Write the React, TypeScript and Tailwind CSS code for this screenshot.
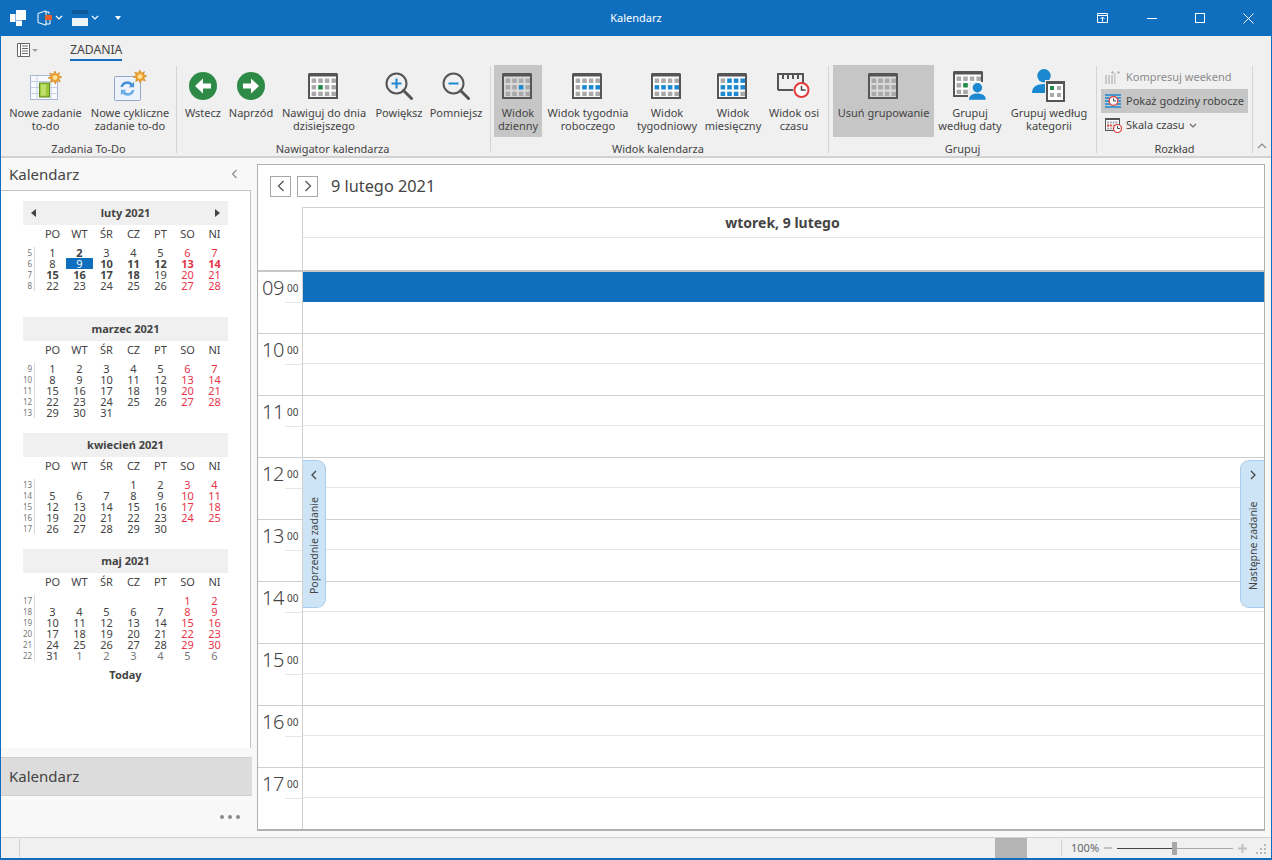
import React from 'react';

const GREY = '#a9a9a9';

type CalIconProps = {
    cells?: Record<number, string>;
    fill?: string;
};

// 4 x 3 calendar glyph used all over the ribbon
const CalIcon: React.FC<CalIconProps> = ({ cells = {}, fill = '#ffffff' }) => {
    const items = [];
    for (let r = 0; r < 3; r++) {
        for (let c = 0; c < 4; c++) {
            const i = r * 4 + c;
            items.push(<rect key={i} x={3.6 + c * 6.6} y={5.5 + r * 6.6} width={4.6} height={4.4} fill={cells[i] || GREY} />);
        }
    }
    return (
        <svg width="30" height="26" viewBox="0 0 30 26" className="mr-[2px]">
            <rect x="1" y="1.5" width="28" height="23.5" fill={fill} stroke="#555555" strokeWidth="2" />
            <rect x="1" y="0" width="28" height="3.5" fill="#555555" />
            {items}
        </svg>
    );
};

const Star: React.FC<{ x: number; y: number }> = ({ x, y }) => (
    <g transform={`translate(${x} ${y})`}>
        <polygon points="7,0 8.4,3.2 11.6,1.6 10.6,4.8 14,6 10.8,7.6 12.4,11 8.8,9.8 7.4,13.4 5.8,10 2.6,11.6 3.4,8 0,7 3.2,5.2 1.6,2 5,3.2" fill="#eda12f" stroke="#c77f1c" strokeWidth="0.5" />
        <circle cx="7" cy="6.6" r="2.4" fill="#ffe39a" />
    </g>
);

const NewTaskIcon = () => (
    <svg width="34" height="30" viewBox="0 0 34 30">
        <rect x="1.5" y="4.5" width="27" height="24" fill="#f7f9fd" stroke="#a8b6d6" />
        <path d="M1.5 10.5h27M1.5 16.5h27M1.5 22.5h27M8 4.5v24M22 4.5v24" stroke="#c4d0e6" fill="none" />
        <rect x="10.5" y="12" width="10" height="14" fill="#9cc83c" stroke="#5f8a1e" />
        <rect x="12" y="13.5" width="5" height="11" fill="#bfe06a" />
        <Star x={19} y={0} />
    </svg>
);

const RecurringIcon = () => (
    <svg width="34" height="32" viewBox="0 0 34 32">
        <rect x="1.5" y="6.5" width="26" height="24" rx="1" fill="#eef3fb" stroke="#93a6c8" />
        <path d="M7.5 17a7 7 0 0 1 12-3.6l1.6-1.6v5.4h-5.4l1.8-1.8a4.6 4.6 0 0 0-7.6 1.6z" fill="#4c93d6" />
        <path d="M21.5 20a7 7 0 0 1-12 3.6l-1.6 1.6v-5.4h5.4l-1.8 1.8a4.6 4.6 0 0 0 7.6-1.6z" fill="#6aaee6" />
        <Star x={20} y={0} />
    </svg>
);

const ArrowCircle: React.FC<{ back?: boolean }> = ({ back }) => (
    <svg width="28" height="28" viewBox="0 0 28 28">
        <circle cx="14" cy="14" r="14" fill="#2e8b47" />
        <g transform={back ? 'rotate(180 14 14)' : undefined}>
            <path d="M6 11.5h8V6.5l8 7.5-8 7.5v-5H6z" fill="#ffffff" />
        </g>
    </svg>
);

const Magnifier: React.FC<{ plus?: boolean }> = ({ plus }) => (
    <svg width="28" height="28" viewBox="0 0 28 28">
        <circle cx="11.5" cy="11.5" r="10" fill="none" stroke="#555555" strokeWidth="2" />
        <path d="M18.5 18.5L26.5 26.5" stroke="#555555" strokeWidth="3" strokeLinecap="round" />
        <path d={plus ? 'M6.5 11.5h10M11.5 6.5v10' : 'M6.5 11.5h10'} stroke="#1b88d0" strokeWidth="2" />
    </svg>
);

const ClockBadge: React.FC<{ cx: number; cy: number; r: number }> = ({ cx, cy, r }) => (
    <g>
        <circle cx={cx} cy={cy} r={r} fill="#ffffff" stroke="#e23b3b" strokeWidth={r > 5 ? 2 : 1.2} />
        <path d={`M${cx} ${cy - r * 0.6}V${cy}H${cx + r * 0.6}`} stroke="#444444" strokeWidth={r > 5 ? 1.5 : 1} fill="none" />
    </g>
);

const TimelineIcon = () => (
    <svg width="34" height="28" viewBox="0 0 34 28">
        <path d="M1 18V2h25v9M1 18h15M6 2v5M11 2v5M16 2v5M21 2v5" stroke="#555555" strokeWidth="2" fill="none" />
        <ClockBadge cx={24.5} cy={18} r={7} />
    </svg>
);

const Person: React.FC<{ x: number; y: number; s: number }> = ({ x, y, s }) => (
    <g transform={`translate(${x} ${y}) scale(${s})`} fill="#1b88d0">
        <circle cx="8" cy="4.5" r="4.5" />
        <path d="M0 16c0-4 3-6 8-6s8 2 8 6z" />
    </g>
);

const GroupDateIcon = () => (
    <svg width="34" height="30" viewBox="0 0 34 30">
        <rect x="1" y="1.5" width="28" height="23.5" fill="#ffffff" stroke="#555555" strokeWidth="2" />
        <rect x="1" y="0" width="28" height="3.5" fill="#555555" />
        {[0, 1, 2].map((r) => [0, 1, 2, 3].map((c) => (
            <rect key={`${r}-${c}`} x={3.6 + c * 6.6} y={5.5 + r * 6.6} width={4.6} height={4.4} fill={r === 1 && c === 1 ? '#1e8a45' : GREY} />
        )))}
        <rect x="15" y="11" width="19" height="19" fill="#f0f0f0" />
        <Person x={16} y={12} s={1.05} />
    </svg>
);

const GroupCategoryIcon = () => (
    <svg width="34" height="34" viewBox="0 0 34 34">
        <Person x={0} y={0} s={1.5} />
        <rect x="13" y="11" width="21" height="23" fill="#f0f0f0" />
        <rect x="15" y="13" width="17" height="19" fill="#ffffff" stroke="#555555" strokeWidth="2" />
        <rect x="14" y="12" width="19" height="3" fill="#555555" />
        <rect x="18" y="17" width="4" height="4" fill="#1e8a45" />
        <rect x="25" y="17" width="4" height="4" fill={GREY} />
        <rect x="18" y="24" width="4" height="4" fill={GREY} />
        <rect x="25" y="24" width="4" height="4" fill={GREY} />
    </svg>
);

const CompressIcon = () => (
    <svg width="16" height="14" viewBox="0 0 16 14">
        <path d="M1 5h2v9H1zM4 5h2v9H4zM7 5h2v9H7zM10 3h1.5v11H10z" fill="#c8c8c8" />
        <path d="M7 2.5h3M8.5 1v3M13 2.5h3M14.5 1v3" stroke="#b8b8b8" />
    </svg>
);

const WorkHoursIcon = () => (
    <svg width="16" height="14" viewBox="0 0 16 14">
        <path d="M0 1h16M0 4h6M0 7h5M0 10h5M0 13h16M11 4h5M11 7h5M11 10h5" stroke="#1b88d0" strokeWidth="1.6" />
        <ClockBadge cx={8.5} cy={7} r={4.3} />
    </svg>
);

const ScaleIcon = () => (
    <svg width="17" height="15" viewBox="0 0 17 15">
        <rect x="0.5" y="0.5" width="14" height="12" fill="#ffffff" stroke="#555555" />
        <rect x="0" y="0" width="15" height="2" fill="#555555" />
        {[0, 1, 2].map((r) => [0, 1, 2, 3].map((c) => (
            <rect key={`${r}-${c}`} x={2 + c * 2.8} y={3.5 + r * 3} width={2} height={2} fill={r === 1 && c < 2 ? '#e23b3b' : GREY} />
        )))}
        <ClockBadge cx={12.5} cy={10.5} r={4} />
    </svg>
);

type RibbonButtonProps = {
    w: string;
    icon: React.ReactNode;
    lines: string[];
    active?: boolean;
};

const RibbonButton: React.FC<RibbonButtonProps> = ({ w, icon, lines, active }) => (
    <div className={`${w} h-[72px] shrink-0 flex flex-col items-center pt-[7px] ${active ? 'bg-[#c6c6c6]' : ''}`}>
        <div className="h-[28px] flex items-center justify-center">{icon}</div>
        <div className="mt-[6px] text-center leading-[13px] whitespace-nowrap">
            {lines.map((l) => <div key={l}>{l}</div>)}
        </div>
    </div>
);

const RibbonGroup: React.FC<{ w: string; pad?: string; labelPad?: string; label: string; children: React.ReactNode }> = ({ w, pad, labelPad, label, children }) => (
    <div className={`${w} shrink-0 flex flex-col`}>
        <div className={`flex h-[72px] ${pad || ''}`}>{children}</div>
        <div className={`mt-[5px] text-center leading-[14px] ${labelPad || ''}`}>{label}</div>
    </div>
);

const Sep = () => <div className="w-px h-[87px] mt-px shrink-0 bg-[#d4d4d4]" />;

const blue = '#1b88d0';
const green = '#1e8a45';

type Month = {
    title: string;
    arrows?: boolean;
    firstWeek: number;
    offset: number;
    days: number;
    trailing?: number;
    bold?: number[];
    selected?: number;
};

const months: Month[] = [
    { title: 'luty 2021', arrows: true, firstWeek: 5, offset: 0, days: 28, bold: [2, 10, 11, 12, 13, 14, 15, 16, 17, 18], selected: 9 },
    { title: 'marzec 2021', firstWeek: 9, offset: 0, days: 31 },
    { title: 'kwiecień 2021', firstWeek: 13, offset: 3, days: 30 },
    { title: 'maj 2021', firstWeek: 17, offset: 5, days: 31, trailing: 6 },
];

const dayNames = ['PO', 'WT', 'ŚR', 'CZ', 'PT', 'SO', 'NI'];

const MonthView: React.FC<{ m: Month }> = ({ m }) => {
    const cells: { d: number; out?: boolean }[] = [];
    for (let i = 1; i <= m.days; i++) cells.push({ d: i });
    for (let i = 1; i <= (m.trailing || 0); i++) cells.push({ d: i, out: true });
    const rows = Math.ceil((m.offset + cells.length) / 7);
    const weeks = [];
    for (let r = 0; r < rows; r++) {
        const row = [];
        for (let c = 0; c < 7; c++) {
            const cell = cells[r * 7 + c - m.offset];
            if (!cell || r * 7 + c < m.offset) {
                row.push(<div key={c} className="w-[27px]" />);
                continue;
            }
            const weekend = c >= 5;
            const isSel = !cell.out && cell.d === m.selected;
            const isBold = !cell.out && m.bold?.includes(cell.d);
            let color = 'text-[#444444]';
            if (weekend) color = 'text-[#e8344a]';
            if (cell.out) color = 'text-[#777777]';
            if (isSel) color = 'bg-[#106ebe] text-white';
            row.push(
                <div key={c} className={`w-[27px] text-center ${color} ${isBold ? 'font-bold' : ''}`}>{cell.d}</div>
            );
        }
        weeks.push(
            <div key={r} className="flex h-[11px] leading-[11px]">
                <div className="w-[12px] pr-[2px] text-right text-[8px] text-[#777777] border-r border-[#d8d8d8] mr-[4px]">{m.firstWeek + r}</div>
                {row}
            </div>
        );
    }
    return (
        <div className="w-[205px] min-h-[116px]">
            <div className="h-[24px] bg-[#f0f0f0] flex items-center justify-center relative font-bold text-[#444444]">
                {m.title}
                {m.arrows && <span className="absolute left-[8px] top-[8px] w-0 h-0 border-y-[4px] border-y-transparent border-r-[5px] border-r-[#444444]" />}
                {m.arrows && <span className="absolute right-[8px] top-[8px] w-0 h-0 border-y-[4px] border-y-transparent border-l-[5px] border-l-[#444444]" />}
            </div>
            <div className="flex h-[18px] items-center pl-[16px] text-[#444444]">
                {dayNames.map((n) => <div key={n} className="w-[27px] text-center">{n}</div>)}
            </div>
            <div className="mt-[4px]">{weeks}</div>
        </div>
    );
};

const hours = ['09', '10', '11', '12', '13', '14', '15', '16', '17'];

const SideTab: React.FC<{ right?: boolean; label: string }> = ({ right, label }) => (
    <div className={`absolute top-[295px] h-[148px] bg-[#cde4f7] border border-[#a9cdea] flex flex-col items-center pt-[9px] ${right ? 'w-[24px] right-0 rounded-l-[9px] border-r-0' : 'w-[23px] left-[45px] rounded-r-[9px] border-l-0'}`}>
        <svg width="8" height="10" viewBox="0 0 8 10" className="mb-[16px] shrink-0">
            <path d={right ? 'M2 1l4 4-4 4' : 'M6 1L2 5l4 4'} stroke="#444444" strokeWidth="1.3" fill="none" />
        </svg>
        <div className="[writing-mode:vertical-rl] rotate-180 text-[#444444] text-[10.5px] leading-[12px] whitespace-nowrap h-[100px] text-center">{label}</div>
    </div>
);

export default function App() {
    return (
        <div className="w-[1272px] h-[860px] flex flex-col bg-[#f8f8f8] border-x border-b-2 border-[#106ebe] overflow-hidden font-['Noto_Sans',sans-serif] text-[11px] text-[#444444]">
            {/* title bar */}
            <div className="h-[36px] -mx-px shrink-0 bg-[#106ebe] flex items-center relative text-white">
                <svg width="16" height="16" viewBox="0 0 16 16" className="ml-[10px]">
                    <path d="M6 0h10v10H6zM0 4h5.5v8H0zM6 10.5h6V16H6z" fill="#ffffff" />
                </svg>
                <svg width="16" height="16" viewBox="0 0 16 16" className="ml-[11px]">
                    <path d="M1 3.5L9 .8v14.4L1 12.5zM9 2h3v2M9 14h4V9" stroke="#ffffff" strokeWidth="1" fill="none" />
                    <rect x="8" y="5" width="7" height="5" fill="#e8602c" />
                </svg>
                <svg width="8" height="6" viewBox="0 0 8 6" className="ml-[2px]"><path d="M1 1l3 3 3-3" stroke="#ffffff" strokeWidth="1.2" fill="none" /></svg>
                <svg width="16" height="16" viewBox="0 0 16 16" className="ml-[9px]">
                    <rect x="0" y="0" width="16" height="4" fill="#0b5a9b" />
                    <rect x="0" y="8" width="16" height="8" fill="#eef3f8" />
                </svg>
                <svg width="8" height="6" viewBox="0 0 8 6" className="ml-[3px]"><path d="M1 1l3 3 3-3" stroke="#ffffff" strokeWidth="1.2" fill="none" /></svg>
                <span className="ml-[16px] w-0 h-0 border-x-[3.5px] border-x-transparent border-t-[4px] border-t-white" />
                <div className="absolute left-0 right-0 text-center text-[11px] text-white">Kalendarz</div>
                <div className="ml-auto flex items-center relative">
                    <svg width="12" height="11" viewBox="0 0 12 11" className="mr-[38px]">
                        <path d="M.5.5h10v9H.5zM.5 2.5h10M5.5 8.5V4M3.5 6l2-2 2 2" stroke="#ffffff" fill="none" />
                    </svg>
                    <div className="w-[10px] h-px bg-white mr-[38px]" />
                    <div className="w-[10px] h-[10px] border border-white mr-[38px]" />
                    <svg width="11" height="11" viewBox="0 0 11 11" className="mr-[18px]">
                        <path d="M.5.5l10 10M10.5.5l-10 10" stroke="#ffffff" />
                    </svg>
                </div>
            </div>

            {/* ribbon */}
            <div className="h-[122px] shrink-0 bg-[#f0f0f0] border-b-2 border-[#d2d2d2] flex flex-col">
                <div className="h-[29px] flex items-start pl-[16px]">
                    <svg width="21" height="14" viewBox="0 0 21 14" className="mt-[7px]">
                        <path d="M.5.5h12v13H.5zM3.5.5v13M5 3h6M5 5.5h6M5 8h6M5 10.5h6" stroke="#666666" fill="#ffffff" />
                        <path d="M15 6h6l-3 3z" fill="#a0a0a0" />
                    </svg>
                    <div className="ml-[32px] mt-[6px] h-[19px] border-b-2 border-[#106ebe] text-[12.2px] leading-[15px] text-[#444444]">ZADANIA</div>
                </div>
                <div className="flex h-[91px]">
                    <RibbonGroup w="w-[175px]" pad="pl-[2px]" label="Zadania To-Do">
                        <RibbonButton w="w-[85px]" icon={<NewTaskIcon />} lines={['Nowe zadanie', 'to-do']} />
                        <RibbonButton w="w-[84px]" icon={<RecurringIcon />} lines={['Nowe cykliczne', 'zadanie to-do']} />
                    </RibbonGroup>
                    <Sep />
                    <RibbonGroup w="w-[313px]" pad="pl-[4px]" labelPad="pr-[2px]" label="Nawigator kalendarza">
                        <RibbonButton w="w-[44px]" icon={<ArrowCircle back />} lines={['Wstecz']} />
                        <RibbonButton w="w-[52px]" icon={<ArrowCircle />} lines={['Naprzód']} />
                        <RibbonButton w="w-[94px]" icon={<CalIcon cells={{ 5: green }} />} lines={['Nawiguj do dnia', 'dzisiejszego']} />
                        <RibbonButton w="w-[56px]" icon={<Magnifier plus />} lines={['Powiększ']} />
                        <RibbonButton w="w-[58px]" icon={<Magnifier />} lines={['Pomniejsz']} />
                    </RibbonGroup>
                    <Sep />
                    <RibbonGroup w="w-[337px]" pad="pl-[3px]" labelPad="pr-[3px]" label="Widok kalendarza">
                        <RibbonButton w="w-[48px]" active icon={<CalIcon fill="#d8d8d8" cells={{ 6: blue }} />} lines={['Widok', 'dzienny']} />
                        <RibbonButton w="w-[92px]" icon={<CalIcon cells={{ 5: blue, 6: blue, 7: blue }} />} lines={['Widok tygodnia', 'roboczego']} />
                        <RibbonButton w="w-[66px]" icon={<CalIcon cells={{ 4: blue, 5: blue, 6: blue, 7: blue }} />} lines={['Widok', 'tygodniowy']} />
                        <RibbonButton w="w-[66px]" icon={<CalIcon cells={{ 1: blue, 2: blue, 3: blue, 4: blue, 5: blue, 6: blue, 7: blue, 8: blue, 9: blue, 10: blue }} />} lines={['Widok', 'miesięczny']} />
                        <RibbonButton w="w-[56px]" icon={<TimelineIcon />} lines={['Widok osi', 'czasu']} />
                    </RibbonGroup>
                    <Sep />
                    <RibbonGroup w="w-[267px]" pad="pl-[4px]" label="Grupuj">
                        <RibbonButton w="w-[101px]" active icon={<CalIcon fill="#d8d8d8" cells={{}} />} lines={['Usuń grupowanie']} />
                        <RibbonButton w="w-[72px]" icon={<GroupDateIcon />} lines={['Grupuj', 'według daty']} />
                        <RibbonButton w="w-[86px]" icon={<GroupCategoryIcon />} lines={['Grupuj według', 'kategorii']} />
                    </RibbonGroup>
                    <Sep />
                    <div className="w-[155px] shrink-0 flex flex-col">
                        <div className="h-[24px] flex items-center pl-[7px] gap-[6px] text-[#8c8c8c]"><CompressIcon /><span>Kompresuj weekend</span></div>
                        <div className="h-[24px] ml-[4px] w-[147px] bg-[#c6c6c6] flex items-center pl-[4px] gap-[5px]"><WorkHoursIcon /><span>Pokaż godziny robocze</span></div>
                        <div className="h-[24px] flex items-center pl-[8px] gap-[4px]">
                            <ScaleIcon /><span>Skala czasu</span>
                            <svg width="8" height="5" viewBox="0 0 8 5"><path d="M1 1l3 3 3-3" stroke="#666666" strokeWidth="1.1" fill="none" /></svg>
                        </div>
                        <div className="mt-[5px] text-center leading-[14px]">Rozkład</div>
                    </div>
                    <Sep />
                    <div className="flex-1 flex justify-center items-end pb-[7px]">
                        <svg width="10" height="6" viewBox="0 0 10 6"><path d="M1 5l4-4 4 4" stroke="#8a8a8a" strokeWidth="1.2" fill="none" /></svg>
                    </div>
                </div>
            </div>

            {/* body */}
            <div className="flex-1 flex min-h-0">
                {/* left pane */}
                <div className="w-[250px] shrink-0 flex flex-col">
                    <div className="h-[32px] shrink-0 flex items-center justify-between pl-[8px] pr-[13px]">
                        <span className="text-[15px] text-[#444444]">Kalendarz</span>
                        <svg width="7" height="10" viewBox="0 0 7 10"><path d="M5.5 1L1.5 5l4 4" stroke="#8a8a8a" strokeWidth="1.2" fill="none" /></svg>
                    </div>
                    <div className="h-[558px] shrink-0 bg-white border-t border-r border-[#c4c4c4] pt-[10px] pl-[22px]">
                        {months.map((m) => <MonthView key={m.title} m={m} />)}
                        <div className="w-[205px] text-center font-bold mt-[2px] text-[#444444]">Today</div>
                    </div>
                    <div className="h-[39px] shrink-0 mt-[9px] w-[251px] bg-[#dcdcdc] border-y border-[#cfcfcf] flex items-center pl-[8px] text-[15px] text-[#444444]">Kalendarz</div>
                    <div className="flex justify-end gap-[4px] pr-[11px] mt-[19px]">
                        <span className="w-[4px] h-[4px] rounded-full bg-[#8a8a8a]" />
                        <span className="w-[4px] h-[4px] rounded-full bg-[#8a8a8a]" />
                        <span className="w-[4px] h-[4px] rounded-full bg-[#8a8a8a]" />
                    </div>
                </div>

                {/* day view */}
                <div className="relative ml-[6px] mt-[6px] w-[1008px] h-[667px] shrink-0 bg-white border border-b-2 border-[#b0b0b0] overflow-hidden flex flex-col">
                    <div className="h-[42px] shrink-0 flex items-center pl-[12px]">
                        <div className="w-[21px] h-[21px] border border-[#a8a8a8] flex items-center justify-center">
                            <svg width="8" height="12" viewBox="0 0 8 12"><path d="M6.5 1L1.5 6l5 5" stroke="#555555" strokeWidth="1.3" fill="none" /></svg>
                        </div>
                        <div className="w-[21px] h-[21px] ml-[6px] border border-[#a8a8a8] flex items-center justify-center">
                            <svg width="8" height="12" viewBox="0 0 8 12"><path d="M1.5 1l5 5-5 5" stroke="#555555" strokeWidth="1.3" fill="none" /></svg>
                        </div>
                        <div className="ml-[13px] text-[16.3px] text-[#444444]">9 lutego 2021</div>
                    </div>
                    <div className="flex h-[65px] shrink-0 border-b-2 border-[#c8c8c8]">
                        <div className="w-[44px] shrink-0" />
                        <div className="flex-1 border-l border-t border-[#d0d0d0]">
                            <div className="h-[30px] border-b border-[#e4e4e4] flex items-center justify-center pr-[2px] font-bold text-[14px] text-[#444444]">wtorek, 9 lutego</div>
                        </div>
                    </div>
                    {hours.map((h, i) => (
                        <div key={h} className="flex h-[62px] shrink-0 border-b border-[#cfcfcf]">
                            <div className="w-[44px] shrink-0 flex flex-col">
                                <div className="h-[30px] flex items-center pl-[4px] pt-[2px] text-[#444444]">
                                    <span className="text-[20px] font-light w-[24px] tracking-[-0.5px]">{h}</span>
                                    <span className="text-[10px] ml-[1px]">00</span>
                                </div>
                                <div className="ml-[27px] border-t border-[#e6e6e6]" />
                            </div>
                            <div className="flex-1 border-l border-[#cfcfcf] flex flex-col">
                                <div className={`h-[30px] border-b ${i === 0 ? 'bg-[#106ebe] border-[#106ebe]' : 'border-[#e6e6e6]'}`} />
                            </div>
                        </div>
                    ))}
                    <SideTab label="Poprzednie zadanie" />
                    <SideTab right label="Następne zadanie" />
                </div>
            </div>

            {/* status bar */}
            <div className="h-[21px] shrink-0 bg-[#f0f0f0] border-t border-[#d2d2d2] flex items-stretch text-[#666666]">
                <div className="w-[19px] border-r border-[#d2d2d2] my-[1px]" />
                <div className="ml-[975px] w-[32px] bg-[#b4b4b4]" />
                <div className="ml-[34px] w-px bg-[#d2d2d2] my-[1px]" />
                <div className="ml-[9px] flex items-center w-[27px]">100%</div>
                <div className="ml-[6px] flex items-center">
                    <div className="w-[8px] h-[2px] bg-[#c0c0c0]" />
                    <div className="ml-[5px] w-[55px] h-px bg-[#444444]" />
                    <div className="w-[5px] h-[13px] bg-[#a8a8a8]" />
                    <div className="w-[56px] h-px bg-[#a8a8a8]" />
                    <svg width="9" height="9" viewBox="0 0 9 9" className="ml-[5px]"><path d="M0 4.5h9M4.5 0v9" stroke="#c0c0c0" strokeWidth="2" /></svg>
                    <svg width="10" height="10" viewBox="0 0 10 10" className="ml-[9px] mt-[2px]">
                        <path d="M8 0h2v2H8zM4 4h2v2H4zM8 4h2v2H8zM0 8h2v2H0zM4 8h2v2H4zM8 8h2v2H8z" fill="#b8b8b8" />
                    </svg>
                </div>
            </div>
        </div>
    );
}
